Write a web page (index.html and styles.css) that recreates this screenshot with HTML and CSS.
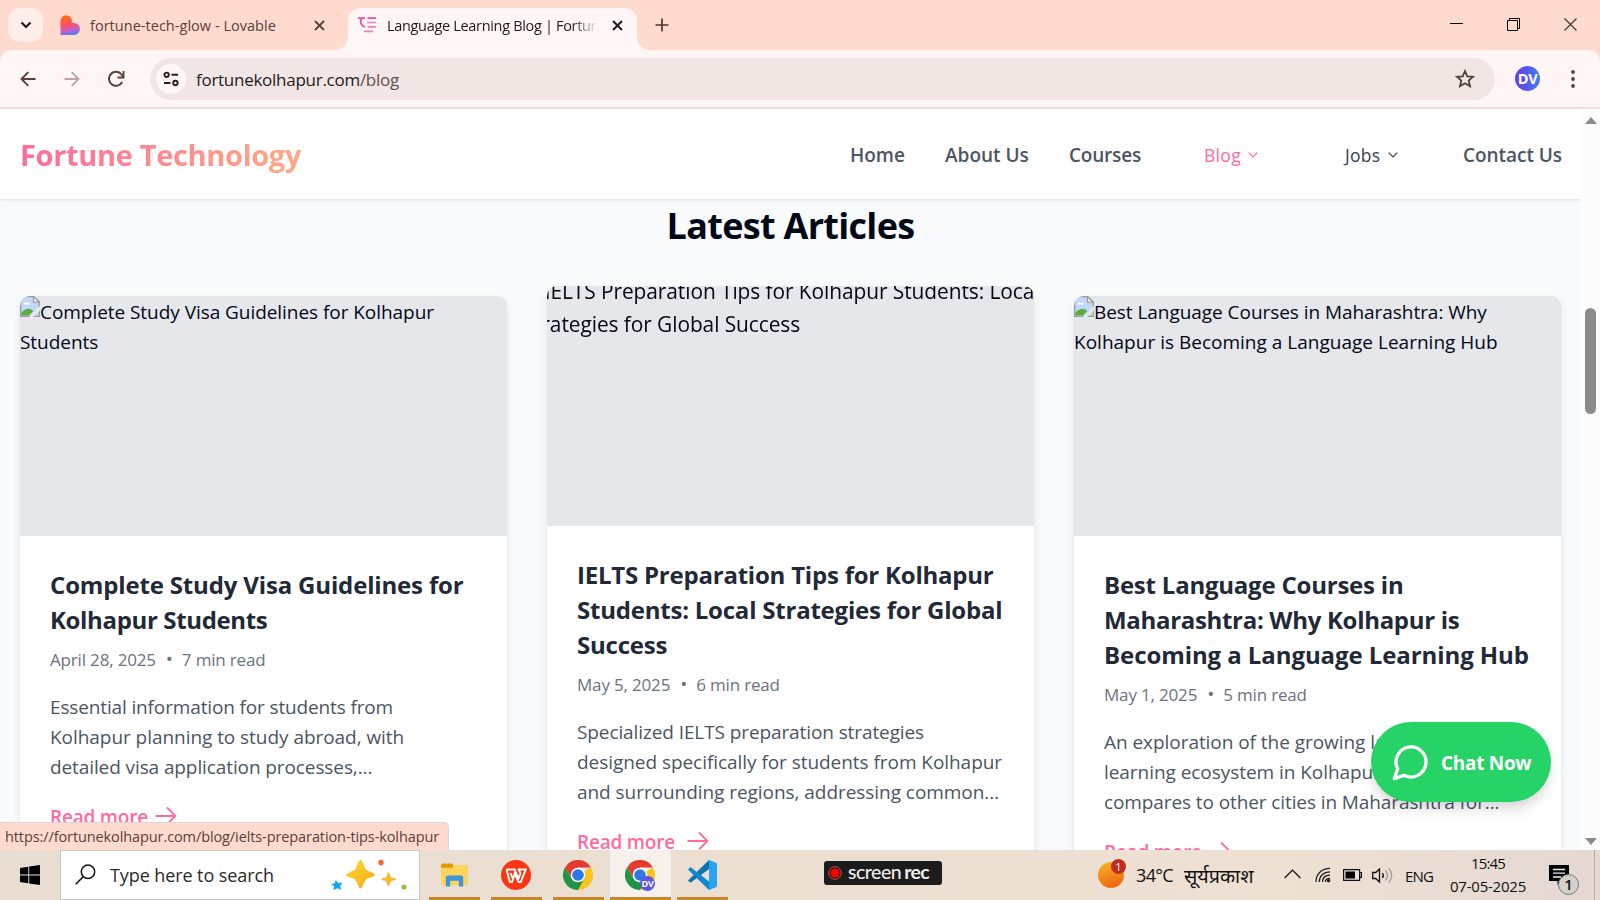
FILE: index.html
```html
<!DOCTYPE html>
<html lang="en">
<head>
<meta charset="utf-8">
<title>Language Learning Blog | Fortune Technology</title>
<link rel="stylesheet" href="styles.css">
</head>
<body>
<div class="screen">
  <div class="tabstrip">
    <div class="tab-search"><svg width="12" height="8" viewBox="0 0 12 8"><path d="M1.500 1.500 6 6l4.500-4.500" fill="none" stroke="#1f1a19" stroke-width="2.200"/></svg></div>
    <div class="tab">
      <svg class="fav" width="20" height="20" viewBox="0 0 20 20"><defs><linearGradient id="lov" x1=".3" y1="0" x2=".5" y2="1"><stop offset=".15" stop-color="#ff6a1a"/><stop offset=".5" stop-color="#ff4b72"/><stop offset=".75" stop-color="#c45fc8"/><stop offset="1" stop-color="#4f7dff"/></linearGradient></defs><path d="M.5 6a5.700 5.700 0 0 1 11.400 0v2h2a6 6 0 0 1 0 12H.5z" fill="url(#lov)"/></svg>
      <span class="tab-title muted">fortune-tech-glow - Lovable</span>
      <svg class="x" width="11" height="11" viewBox="0 0 11 11"><path d="m1 1 9 9M10 1l-9 9" stroke="#5a403a" stroke-width="1.800"/></svg>
    </div>
    <div class="tab active">
      <svg class="fav2" width="19" height="16" viewBox="0 0 19 16" stroke="#ea4c97" stroke-width="1.700" fill="none"><path d="M0 1.200h7M3.700 1.500C1.800 4 2.200 8.500 7 10M9.500 1.200H18"/><path d="M9 5.500h9M9.500 9.800H18M6 14.300h9" stroke="#f07db2"/></svg>
      <span class="tab-title fade">Language Learning Blog | Fortune</span>
      <svg class="x" width="11" height="11" viewBox="0 0 11 11"><path d="m1 1 9 9M10 1l-9 9" stroke="#1f1a19" stroke-width="2"/></svg>
    </div>
    <svg class="plus" width="14" height="14" viewBox="0 0 14 14"><path d="M7 .5v13M.5 7h13" stroke="#4a3530" stroke-width="1.700"/></svg>
    <div class="win">
      <svg width="13" height="13" viewBox="0 0 13 13"><path d="M0 5.500h13" stroke="#000"/></svg>
      <svg width="13" height="13" viewBox="0 0 13 13"><path d="M.5 2.500h10v10H.5zM2.500 2.500v-2h10v10h-2" fill="none" stroke="#000"/></svg>
      <svg width="13" height="13" viewBox="0 0 13 13"><path d="m.5.5 12 12M12.500.5l-12 12" stroke="#3c3230" stroke-width="1.100"/></svg>
    </div>
  </div>

  <div class="toolbar-wrap"><div class="toolbar">
    <svg class="nav-i" width="16" height="16" viewBox="0 0 16 16"><path d="M15.500 8H2M8.300 1.200 1.500 8l6.800 6.800" fill="none" stroke="#5a403a" stroke-width="1.900"/></svg>
    <svg class="nav-i" width="16" height="16" viewBox="0 0 16 16"><path d="M.5 8H14M7.700 1.200 14.500 8l-6.800 6.800" fill="none" stroke="#b9a6a2" stroke-width="1.900"/></svg>
    <svg class="nav-i" width="17" height="18" viewBox="0 0 17 18"><path d="M14.200 12A7 7 0 1 1 13.500 4.500L15.500 7" fill="none" stroke="#5a403a" stroke-width="2"/><path d="M15.500 1v6.500H9.500" fill="none" stroke="#5a403a" stroke-width="1.900"/></svg>
    <div class="omnibox">
      <div class="site"><svg width="16" height="16" viewBox="0 0 16 16" fill="none" stroke="#2b1f1d" stroke-width="1.900"><circle cx="3.600" cy="3.800" r="2.200"/><path d="M8.500 3.800H15M1 12h6.500"/><circle cx="12.400" cy="12" r="2.200"/></svg></div>
      <span class="url">fortunekolhapur.com<i>/blog</i></span>
      <svg class="star" width="20" height="19" viewBox="0 0 20 19"><path d="m10 2 2.300 5.300 5.700.5-4.300 3.800 1.300 5.600-5-3-5 3 1.300-5.600L2 7.800l5.700-.5z" fill="none" stroke="#4d3f3c" stroke-width="1.800"/></svg>
    </div>
    <div class="avatar">DV</div>
    <svg class="dots" width="4" height="18" viewBox="0 0 4 18" fill="#5a403a"><circle cx="2" cy="2" r="1.900"/><circle cx="2" cy="9" r="1.900"/><circle cx="2" cy="16" r="1.900"/></svg>
  </div></div>

  <div class="viewport">
    <div class="page">
      <header class="header">
        <div class="brand">Fortune Technology</div>
        <nav class="nav">
          <a class="home">Home</a><a class="about">About Us</a><a class="courses">Courses</a>
          <a class="drop blog">Blog<svg width="10" height="6" viewBox="0 0 10 6"><path d="m.7.700 4.300 4.300L9.300.7" fill="none" stroke="currentColor" stroke-width="1.200"/></svg></a>
          <a class="drop jobs">Jobs<svg width="10" height="6" viewBox="0 0 10 6"><path d="m.7.700 4.300 4.300L9.300.7" fill="none" stroke="currentColor" stroke-width="1.200"/></svg></a>
          <a class="contact">Contact Us</a>
        </nav>
      </header>
      <section class="articles">
        <h2>Latest Articles</h2>
        <div class="grid">
          <article class="card">
            <div class="thumb"><div class="alt"><svg class="broken" width="20" height="21" viewBox="0 0 20 21"><path d="M.7.700h12.800l5.800 5.300v14.300H.7z" fill="#c3d7f8" stroke="#9b9b9b" stroke-width="1.300"/><path d="M13.500.7V6.200h5.800z" fill="#fff" stroke="#9b9b9b" stroke-width="1.200"/><path d="M3.500 8.500c0-2 2-2.500 3-1.500 1-1.500 3.500-.8 3.300 1.500z" fill="#fff"/><path d="M1.400 19.600v-2.500c2.500-4 7-5.500 10-3.500l2 1.500-4.500 4.500z" fill="#5cae3c"/><path d="M8.800 21 20 10v4.500L13.200 21z" fill="#e5e7eb"/></svg>Complete Study Visa Guidelines for Kolhapur<br>Students</div></div>
            <div class="body">
              <h3>Complete Study Visa Guidelines for<br><span class="t35">Kolhapur Students</span></h3>
              <div class="meta"><span>April 28, 2025</span><b>•</b><span>7 min read</span></div>
              <p><span class="t14">Essential information for students from</span><br>Kolhapur planning to study abroad, with<br><span class="t10">detailed visa application processes,...</span></p>
              <a class="more">Read more<svg width="22" height="20" viewBox="0 0 22 20"><path d="M.5 10h20M12 1.500l8.500 8.500-8.500 8.500" fill="none" stroke="currentColor" stroke-width="1.800"/></svg></a>
            </div>
          </article>
          <article class="card lifted">
            <div class="thumb"><div class="alt zoomed"><svg class="broken" width="20" height="21" viewBox="0 0 20 21"><path d="M.7.700h12.800l5.800 5.300v14.300H.7z" fill="#c3d7f8" stroke="#9b9b9b" stroke-width="1.300"/></svg>IELTS Preparation Tips for Kolhapur Students: Local<br>Strategies for Global Success</div></div>
            <div class="body">
              <h3 class="tight">IELTS Preparation Tips for Kolhapur<br>Students: Local Strategies for Global<br>Success</h3>
              <div class="meta"><span>May 5, 2025</span><b>•</b><span>6 min read</span></div>
              <p><span class="t10">Specialized IELTS preparation strategies</span><br>designed specifically for students from Kolhapur<br>and surrounding regions, addressing common...</p>
              <a class="more hovered">Read more<svg width="22" height="20" viewBox="0 0 22 20"><path d="M.5 10h20M12 1.500l8.500 8.500-8.500 8.500" fill="none" stroke="currentColor" stroke-width="1.800"/></svg></a>
            </div>
          </article>
          <article class="card">
            <div class="thumb"><div class="alt"><svg class="broken" width="20" height="21" viewBox="0 0 20 21"><path d="M.7.700h12.800l5.800 5.300v14.300H.7z" fill="#c3d7f8" stroke="#9b9b9b" stroke-width="1.300"/><path d="M13.500.7V6.200h5.800z" fill="#fff" stroke="#9b9b9b" stroke-width="1.200"/><path d="M3.500 8.500c0-2 2-2.500 3-1.500 1-1.500 3.500-.8 3.300 1.500z" fill="#fff"/><path d="M1.400 19.600v-2.500c2.500-4 7-5.500 10-3.500l2 1.500-4.500 4.500z" fill="#5cae3c"/><path d="M8.800 21 20 10v4.500L13.200 21z" fill="#e5e7eb"/></svg>Best Language Courses in Maharashtra: Why<br><span class="loose">Kolhapur is Becoming a Language Learning Hub</span></div></div>
            <div class="body">
              <h3 class="wide"><span class="t22">Best Language Courses in</span><br><span class="t31">Maharashtra: Why Kolhapur is</span><br>Becoming a Language Learning Hub</h3>
              <div class="meta"><span>May 1, 2025</span><b>•</b><span>5 min read</span></div>
              <p>An exploration of the growing language<br>learning ecosystem in Kolhapur and how it<br><span class="t10">compares to other cities in Maharashtra for...</span></p>
              <a class="more">Read more<svg width="22" height="20" viewBox="0 0 22 20"><path d="M.5 10h20M12 1.500l8.500 8.500-8.500 8.500" fill="none" stroke="currentColor" stroke-width="1.800"/></svg></a>
            </div>
          </article>
        </div>
      </section>
      <div class="chat"><svg width="40" height="40" viewBox="0 0 24 24" fill="none" stroke="#fff" stroke-width="2" stroke-linecap="round" stroke-linejoin="round"><path d="M7.900 20A9 9 0 1 0 4 16.100L2 22Z"/></svg><span>Chat Now</span></div>
    </div>
    <div class="scroll"><i class="up"></i><i class="thumb-bar"></i><i class="down"></i></div>
    <div class="status">https://fortunekolhapur.com/blog/ielts-preparation-tips-kolhapur</div>
  </div>

  <div class="taskbar">
    <svg class="start" width="20" height="20" viewBox="0 0 20 20"><path d="M0 2.900 8.300 1.700v7.800H0zM9.200 1.500 20 0v9.500H9.200zM0 10.400h8.300v7.900L0 17.100zM9.200 10.400H20V20L9.200 18.500z"/></svg>
    <div class="search">
      <svg class="mag" width="21" height="21" viewBox="0 0 21 21" fill="none" stroke="#111" stroke-width="1.500"><circle cx="13" cy="7.800" r="6.700"/><path d="M8.300 12.600.7 20.200"/></svg>
      <span>Type here to search</span>
      <svg class="spark" width="76" height="32" viewBox="0 0 76 32"><defs><linearGradient id="gold" x1="0" y1="0" x2="1" y2="1"><stop offset="0" stop-color="#ffda2e"/><stop offset="1" stop-color="#f5a81c"/></linearGradient></defs><path d="M29.500 1c2.500 0 3.500 7.500 5.500 9.500s9 3.500 9 5.500-7 2.500-9 4.500-3.500 9-5.500 9-3.500-7-5.500-9-9-2.500-9-4.500 7-3.500 9-5.500S27 1 29.500 1z" fill="url(#gold)"/><path d="M57.500 13c1 0 1.500 4.500 2.500 5.300s5 .8 5 2-4 1.200-5 2.200-1.500 4.800-2.500 4.800-1.500-3.800-2.500-4.800-4.500-1-4.500-2.200 3.500-1.200 4.500-2 1.500-5.300 2.500-5.300z" fill="#f7b92a"/><path d="m4.500 21 3 3 4-.5-2.200 3.400.7 4-3.600-1.600L2.600 31l.4-3.800L0 25l3.800-.8z" fill="#12a7ee"/><circle cx="50" cy="3.500" r="2.700" fill="#f1652a"/><circle cx="73" cy="28" r="2.600" fill="#8cc63e"/></svg>
    </div>
    <div class="app a1"><svg width="27" height="24" viewBox="0 0 28 24"><path d="M0 2a2 2 0 0 1 2-2h9l2 2v4H0z" fill="#dc9a06"/><path d="M0 4.500h12L14 2h13a1 1 0 0 1 1 1v18a1.500 1.500 0 0 1-1.500 1.500h-25A1.500 1.500 0 0 1 0 21z" fill="#fdd35c"/><path d="M5 24V14.500a2 2 0 0 1 2-2h14a2 2 0 0 1 2 2V24h-4.500v-6h-9v6z" fill="#3b97dc"/></svg></div>
    <div class="app a2"><svg width="30" height="30" viewBox="0 0 30 30"><circle cx="15" cy="15" r="15" fill="#fb3413"/><path d="M5.500 9.500H13.500l4 9 2-5-1.800-4h7L19.800 22h-2.300l-3.800-8.500L11 22H8.800L5.500 9.500M9.500 13l2 5" fill="none" stroke="#fff" stroke-width="1.900"/></svg></div>
    <div class="app a3"><svg width="30" height="30" viewBox="0 0 30 30"><path d="M15 15 28 7.500A15 15 0 0 1 15 30z" fill="#fcc31a"/><path d="M2 7.500 8.500 18.800 15 15V7.500h13A15 15 0 0 0 2 7.500z" fill="#e33b2e"/><path d="M2 7.500A15 15 0 0 0 15 30l6.400-11.400L8.700 18.800z" fill="#1f9446"/><circle cx="15" cy="15" r="7.300" fill="#fff"/><circle cx="15" cy="15" r="5.800" fill="#2b78e8"/></svg></div>
    <div class="app a4"><svg width="30" height="30" viewBox="0 0 30 30"><path d="M15 15 28 7.500A15 15 0 0 1 15 30z" fill="#fcc31a"/><path d="M2 7.500 8.500 18.800 15 15V7.500h13A15 15 0 0 0 2 7.500z" fill="#e33b2e"/><path d="M2 7.500A15 15 0 0 0 15 30l6.400-11.400L8.700 18.800z" fill="#1f9446"/><circle cx="15" cy="15" r="7.300" fill="#fff"/><circle cx="15" cy="15" r="5.800" fill="#2b78e8"/></svg><span class="mini">DV</span></div>
    <div class="app a5"><svg width="30" height="30" viewBox="0 0 30 30"><path d="m1 20.500 2.500 2.300L22 9V0z" fill="#0b74b5"/><path d="M1 9.500 3.500 7 22 21.500V30z" fill="#1287cf"/><path d="m22 0 7 2.800a1.500 1.500 0 0 1 1 1.500v21.400a1.500 1.500 0 0 1-1 1.500L22 30z" fill="#27a3f1"/></svg></div>
    <div class="rec"><svg width="14" height="14" viewBox="0 0 14 14"><circle cx="7" cy="7" r="6.300" fill="none" stroke="#e04848" stroke-width="1"/><circle cx="7" cy="7" r="4.600" fill="#f00"/></svg><span>screen<b>rec</b></span></div>
    <div class="sun"><i>1</i></div>
    <span class="temp">34°C</span><span class="dev">सूर्यप्रकाश</span>
    <svg class="chev" width="17" height="10" viewBox="0 0 17 10"><path d="m.6 9 7.900-7.900L16.400 9" fill="none" stroke="#111" stroke-width="1.300"/></svg>
    <svg class="wifi" width="16" height="16" viewBox="0 0 17 16" fill="none" stroke="#222" stroke-width="1.300"><path d="M1 15.500C1 7 7 1 16 1M4.500 15.500C4.500 9 9 4.700 16 4.700M8 15.500C8 11 11 8.200 16 8.200"/><path d="M11 15.500c0-2.500 2-4 5-4" /><circle cx="14.500" cy="14" r="1.200" fill="#000"/></svg>
    <svg class="batt" width="19" height="12" viewBox="0 0 19 12"><path d="M.6.600h16v10.800H.6zM17 3.500h1.400v5H17" fill="none" stroke="#111" stroke-width="1.200"/><path d="M2.500 2.500h9.500v7H2.500z"/></svg>
    <svg class="spk" width="21" height="17" viewBox="0 0 21 17" fill="none" stroke="#111" stroke-width="1.300"><path d="M.7 5.500h3L7.500 2v13L3.700 11.500h-3z"/><path d="M10.500 6c1 1.500 1 3.500 0 5"/><path d="M13.500 3.500c2.400 3 2.400 7 0 10M16.800 1.200c3.600 4.500 3.600 10 0 14.600" stroke="#a79c93"/></svg>
    <span class="eng">ENG</span>
    <div class="clock"><span class="time">15:45</span><span>07-05-2025</span></div>
    <div class="note"><svg width="20" height="20" viewBox="0 0 20 20"><path d="M0 0h20v16h-7l-4.500 4v-4H0z"/><path d="M4 4.500h12M4 8.200h12M4 12h8" stroke="#eee" stroke-width="1.300"/></svg><i>1</i></div>
    <div class="peek"></div>
  </div>
</div>
</body>
</html>
```
FILE: styles.css
```css
*{box-sizing:border-box}
body{margin:0;font-family:"Open Sans","Noto Sans",sans-serif;color:#020817}
svg{display:block;flex:none}
i{font-style:normal}
.screen{width:1600px;height:900px;overflow:hidden;display:flex;flex-direction:column}

/* Browser tabs */
.tabstrip{height:50px;flex:none;background:#ffdacf;display:flex;align-items:flex-start;padding-left:8px}
.tab-search{width:35px;height:34px;margin-top:8px;border-radius:12px;background:#ffede7;display:flex;align-items:center;justify-content:center}
.tab{display:flex;align-items:center;width:305px;height:34px;margin-top:8px;padding-left:17px}
.tab-title{font-size:14.500px;letter-spacing:.03px;white-space:nowrap;color:#1f1a19}
.tab .fav{margin-right:10px}
.muted{color:#5a403a;width:224px}
.tab.active{position:relative;width:289px;height:42px;padding:0 0 8px 10px;background:#fff6f5;border-radius:13px 13px 0 0}
.tab.active::before,.tab.active::after{content:"";position:absolute;bottom:0;width:13px;height:13px}
.tab.active::before{left:-13px;background:radial-gradient(circle at 0 0,#ffdacf 12.500px,#fff6f5 13.500px)}
.tab.active::after{right:-13px;background:radial-gradient(circle at 100% 0,#ffdacf 12.500px,#fff6f5 13.500px)}
.fav2{margin-right:10px}
.fade{width:211px;margin-right:14px;overflow:hidden;letter-spacing:-.32px;-webkit-mask-image:linear-gradient(90deg,#000 185px,transparent 211px);mask-image:linear-gradient(90deg,#000 185px,transparent 211px)}
.plus{margin:18px 0 0 18px}
.win{margin:18px 23px 0 auto;display:flex;gap:44px}

/* Toolbar */
.toolbar-wrap{height:59px;flex:none;background:#ffdacf}
.toolbar{height:59px;background:#fff6f5;border-radius:11px 11px 0 0;border-bottom:2px solid #f6dcd5;display:flex;align-items:center;padding-left:20px}
.nav-i{margin-right:28px}
.nav-i:nth-child(3){margin:0 25px 0 0}
.omnibox{width:1345px;height:42px;border-radius:21px;background:#f2e6e5;display:flex;align-items:center;padding:0 20px 0 6px}
.site{width:30px;height:30px;border-radius:50%;background:#fff6f5;display:flex;align-items:center;justify-content:center;margin-right:10px}
.url{margin-top:2px;font-size:17px;letter-spacing:-.27px;color:#1f1a19}
.url i{color:#5f504d}
.star{margin-left:auto}
.avatar{width:25px;height:25px;margin:-1px 31px 0 20px;border-radius:50%;background:linear-gradient(90deg,#6a3be8,#3f7df2);color:#fff;font:700 14.500px/25px "Open Sans",sans-serif;letter-spacing:-.3px;text-align:center}

/* Page */
.viewport{position:relative;height:741px;flex:none;display:flex;overflow:hidden}
.page{position:relative;width:1581px;height:741px;background:#f9fafc;overflow:hidden}
.header{position:relative;z-index:2;height:90px;background:#fefefe;box-shadow:0 1px 3px rgba(0,0,0,.1);display:flex;align-items:center;padding:2px 20px 0}
.brand{font-weight:700;font-size:29px;letter-spacing:-.33px;line-height:38px;background:linear-gradient(90deg,#ff6b9b,#ffa987);-webkit-background-clip:text;background-clip:text;color:transparent}
.nav{margin-left:auto;display:flex;align-items:center;font-size:19px;font-weight:600;color:#4b5563;letter-spacing:0;white-space:nowrap}
.home{width:55px}
.about{width:85px;margin-left:40px}
.courses{width:72px;margin-left:39px;letter-spacing:-.2px}
.drop{display:flex;align-items:center;justify-content:space-between;font-size:17.500px;width:54px;color:#374151;font-weight:500;letter-spacing:.3px}
.drop svg{margin-top:-1px}
.blog{margin-left:63px;color:#ff6b9b}
.jobs{margin-left:87px;width:53px}
.contact{width:98px;margin-left:65px;letter-spacing:-.05px}
.articles{padding:6px 20px 0}
h2,h3,p{margin:0}
h2{font-size:36px;line-height:42px;letter-spacing:-.7px;text-align:center}
.grid{display:grid;grid-template-columns:repeat(3,487px);gap:40px;align-items:start;margin-top:49px}
.card{height:640px;background:#fff;border-radius:10px;box-shadow:0 4px 8px rgba(0,0,0,.08),0 1px 3px rgba(0,0,0,.04);overflow:hidden}
.lifted{margin-top:-10px;box-shadow:0 6px 10px rgba(0,0,0,.09)}
.thumb{height:240px;background:#e5e7eb;overflow:hidden}
.alt{height:240px;padding-top:1px;font-size:19px;line-height:30px;letter-spacing:-.05px;white-space:nowrap}
.zoomed{transform:scale(1.1);letter-spacing:-.07px}
.broken{float:left;margin:-1px 0 0}
.loose{letter-spacing:.01px}
.body{padding:31px 30px 0;white-space:nowrap}
h3{font-size:24px;line-height:35px;color:#1f2937;letter-spacing:-.16px}
h3.tight{letter-spacing:-.22px}
h3.wide{letter-spacing:-.08px}
.t10{letter-spacing:-.1px}
.t14{letter-spacing:-.14px}
.t22{letter-spacing:-.22px}
.t31{letter-spacing:-.31px}
.t35{letter-spacing:-.35px}
.meta{display:flex;margin-top:10px;font-size:17px;line-height:25px;color:#6b7280;letter-spacing:-.17px}
.meta b{font-weight:400;font-size:19px;margin:0 9px 0 10px}
p{margin-top:20px;font-size:19px;line-height:30px;color:#4b5563;letter-spacing:-.05px}
.more{display:flex;align-items:center;margin-top:20px;font-size:19px;font-weight:600;line-height:30px;color:#ff6b9b;letter-spacing:-.2px}
.more svg{margin:-2px 0 0 7px}
.more.hovered svg{margin-left:12px}
.chat{position:absolute;left:1371px;top:613px;width:180px;height:80px;border-radius:40px;background:#25d366;box-shadow:0 10px 15px -3px rgba(0,0,0,.12),0 4px 8px rgba(0,0,0,.06);display:flex;align-items:center;padding-left:20px;color:#fff;font-size:19px;font-weight:700;letter-spacing:-.3px;white-space:nowrap}
.chat span{margin:2px 0 0 10px}
.scroll{width:19px;background:#fcfcfc;display:flex;flex-direction:column;align-items:center}
.up,.down{border:6.500px solid transparent}
.up{margin-top:2px;border-bottom:7px solid #8b8b8b}
.thumb-bar{width:11px;height:106px;margin:184px 0 0;border-radius:6px;background:#8b8b8b}
.down{margin:auto 0 -1px;border-top:7px solid #8b8b8b}
.status{position:absolute;left:0;top:713px;width:449px;height:28px;padding-left:5px;background:#ffdacf;border:solid #dcd5d6;border-width:1px 1px 0 0;border-radius:0 5px 0 0;color:#5a403a;font-size:14.500px;line-height:28px;letter-spacing:-.1px;white-space:nowrap}

/* Taskbar */
.taskbar{height:50px;flex:none;background:linear-gradient(90deg,#e9ddd1,#ecdfd2 50%,#eee0d2 80%,#e5d8d3);display:flex;align-items:center;color:#111;white-space:nowrap}
.start{margin:0 20px}
.search{width:360px;height:50px;background:#fff;border:1px solid #c8c8c8;display:flex;align-items:center;padding:0 12px 0 14px;font-size:18px;letter-spacing:-.09px;color:#2a2a2a}
.mag{margin:-1px 14px 0 0}
.spark{margin:-1px 0 0 auto}
.app{position:relative;height:50px;display:flex;align-items:center;justify-content:center;border-bottom:3px solid #ca8527;width:51px;padding:3px 1px 0 0}
.a1{margin-left:9px}
.a2,.a3{margin-left:11px}
.a4{width:61px;margin-left:6px;background:#f7f1eb}
.a5{margin-left:6px}
.a5 svg{margin-right:1px}
.mini{position:absolute;left:30px;top:26px;width:15px;height:15px;border-radius:50%;background:#5a55e6;color:#fff;font-size:9px;font-weight:700;line-height:15px;text-align:center;letter-spacing:-.2px}
.rec{width:118px;height:24px;margin:-4px 0 0 96px;border-radius:3px;background:#1c1c1c;display:flex;align-items:center;padding-left:4px;color:#eee}
.rec span{margin:-3px 0 0 6px;font:500 19.500px/24px Lato,sans-serif;letter-spacing:-.5px}
.rec b{margin-left:3px;letter-spacing:-.6px}
.sun{position:relative;width:26px;height:26px;margin-left:156px;border-radius:50%;background:linear-gradient(160deg,#f3b92d,#f26b12 80%)}
.sun i{position:absolute;left:13px;top:-3px;width:15px;height:15px;border-radius:50%;background:#c42b1c;color:#fff;font-size:11px;line-height:15px;text-align:center}
.temp{width:48px;margin-left:12px;font-size:18px;letter-spacing:-.66px}
.dev{width:70px;font-size:19.700px}
.chev{margin:-2px 0 0 30px}
.wifi{margin-left:14px}
.batt{margin-left:12px}
.spk{margin-left:10px}
.eng{width:29px;margin:1px 0 0 12px;font-size:15px;letter-spacing:-.8px}
.clock{width:76px;margin-left:16px;font-size:15px;line-height:23px;letter-spacing:-.23px;display:flex;flex-direction:column;align-items:center}
.time{letter-spacing:-.8px}
.note{position:relative;margin:-1px 0 0 23px}
.note i{position:absolute;left:9px;top:9px;width:21px;height:21px;border:1px solid #777;border-radius:50%;background:#d6d0cb;font-size:15px;font-weight:600;line-height:19px;text-align:center}
.peek{width:1px;height:50px;margin-left:25px;background:#b5aaa4}
```
